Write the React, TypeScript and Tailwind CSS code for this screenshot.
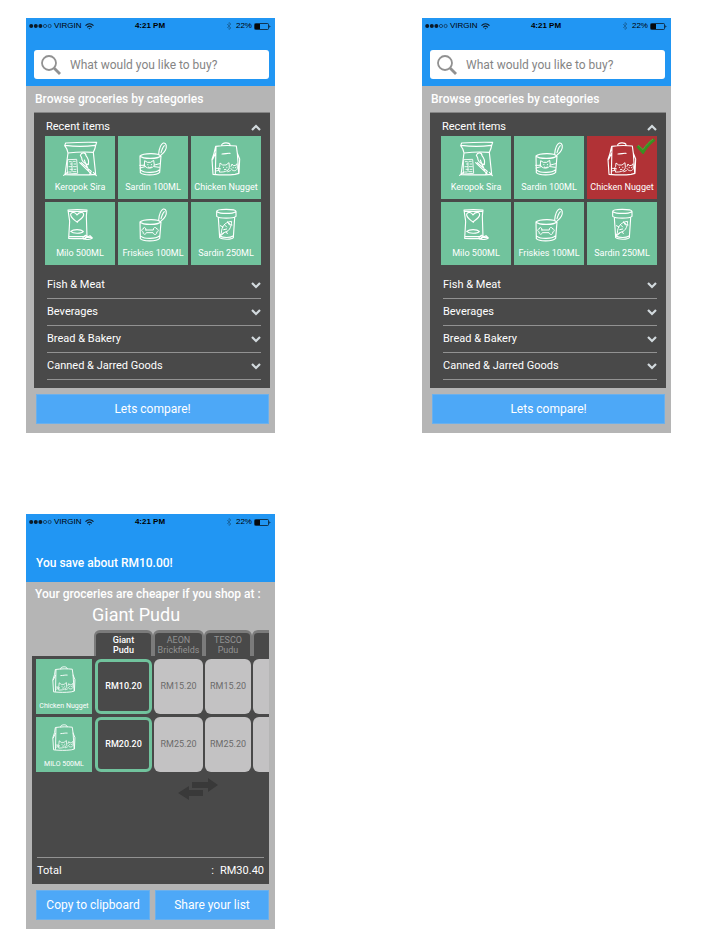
import React from "react";

type IconName = "chips" | "can" | "bag" | "pouch" | "boneCan" | "jar";

type Item = { name: string; icon: IconName };

const recentItems: Item[] = [
  { name: "Keropok Sira", icon: "chips" },
  { name: "Sardin 100ML", icon: "can" },
  { name: "Chicken Nugget", icon: "bag" },
  { name: "Milo 500ML", icon: "pouch" },
  { name: "Friskies 100ML", icon: "boneCan" },
  { name: "Sardin 250ML", icon: "jar" },
];

const categories = ["Fish & Meat", "Beverages", "Bread & Bakery", "Canned & Jarred Goods"];

const tinBody = (
  <>
    <path d="M66 60c10-9 55-10 62 0c-8 9-52 10-62 0zM66 60l1 50c8 9 48 9 58-1l4-49M69 103c12 9 44 8 55-1" />
    <path d="M122 54c1-12 4-28 14-33c10-1 11 13 6 22c-4 8-10 12-15 16M129 50c3-9 5-18 10-21" />
  </>
);

const drawings: Record<IconName, React.ReactNode> = {
  chips: (
    <>
      <path d="M62 21c30-2 60-3 93-2l-3 9c-1 9-4 15-7 21l7 66c-28 3-60 2-92 1l9-65c-1-9-5-16-10-22zM61 28c30 4 60 4 90 0M69 51c24-3 50-4 76-2M56 118l13-10M154 119l-9-10" />
      <path d="M69 71l26-1l3 42l-30 2zM73 77h6M84 76h7M76 84h4M87 84h5M72 92h8M85 92h9M75 100h7M87 100h6M72 108h6M84 107h9M81 80v26" strokeWidth="2.6" />
      <path d="M106 58c4-11 17-9 17 1c7 8 9 17 7 27c-11-3-20-10-20-21zM118 72l6 16M104 80l34 33M109 80l30 26l-5 9M124 86l7 17" />
    </>
  ),
  can: (
    <>
      {tinBody}
      <path d="M79 87l1-13l8 5h10l9-6l2 14c-3 12-27 13-30 0zM65 88h15M66 96l15-4M110 87l15-4M109 92l15 2M89 86h1M100 86h1M91 93l4 2l5-2" strokeWidth="3" />
    </>
  ),
  bag: (
    <>
      <path d="M74 31c22-3 43-3 62-1l3 22l7 17l-2 43l-12 3c-23 3-43 2-66 0l-3-45l6-18zM75 33l-2 80M65 70l8-17M139 52l4 58M92 29c-3-10 27-12 25-1M93 54c10 0 16-3 24-2" />
      <path d="M86 108c-5-7-4-12 0-17l1-10l8 6h10l9-7l1 14c-1 13-20 15-29 14M76 97l12 1M75 105l12-3M97 94h1M107 94h1M100 101l5-1M120 91l3-7l4 5l7-1l4-5l1 14c-2 9-15 10-19 1M126 95h1M133 95h1M118 104l-8 3" strokeWidth="2.8" />
    </>
  ),
  pouch: (
    <>
      <path d="M69 24c19-2 37-2 57 0l-2 18l2 63l-4 4c-17 2-34 1-51 0l3-51zM71 28h52M74 104h46" />
      <path d="M97 61c-11-9-22-15-20-25c5-8 15-5 19 3c6-10 20-11 20-1c-1 10-12 15-20 22M77 88c8-7 31-7 38 0c-5 7-30 8-38 0z" />
      <path d="M114 105l8-5l6 4l7-3l7 7c-5 5-19 5-27 3zM121 106h17" />
    </>
  ),
  boneCan: (
    <>
      {tinBody}
      <path d="M84 84h22c-1-9 9-10 10-3c7 0 6 9 0 9c2 9-9 10-11 2H85c-2 8-12 5-9-2c-7-2-6-9 0-9c-1-7 8-7 8 3z" strokeWidth="3" />
    </>
  ),
  jar: (
    <>
      <path d="M77 28c0-8 57-8 58 0v15c-8 7-50 7-58 0zM78 29c10 7 46 7 56 0M82 47l4 60c8 6 35 7 41 0l4-60M87 102c9 6 31 6 39 0" />
      <path d="M91 92c1-17 8-31 31-34c-1 20-9 32-25 34l-9 8zM110 59l4 9l9 1M96 75l-8-4M105 88l4 7M102 70l5 5M98 83l9-2M115 65h1M88 102l10-8" strokeWidth="3" />
    </>
  ),
};

function ProductIcon({ name, className }: { name: IconName; className: string }) {
  return (
    <svg viewBox="0 0 210 126" className={className} fill="none" stroke="white" strokeWidth="3.4" strokeLinecap="round" strokeLinejoin="round" aria-hidden="true">
      {drawings[name]}
    </svg>
  );
}

function Chevron({ up = false }: { up?: boolean }) {
  return (
    <svg viewBox="0 0 10 8" className="h-2 w-2.5 shrink-0" fill="none" stroke="#d3dade" strokeWidth="2.2" aria-hidden="true">
      <path d={up ? "M1 6l4-4l4 4" : "M1 2l4 4l4-4"} />
    </svg>
  );
}

function StatusBar() {
  return (
    <div className="grid h-4 grid-cols-3 items-center pl-[3px] pr-1 font-['Liberation_Sans',Arial,sans-serif] text-[8px] leading-4 text-black">
      <div className="flex items-center">
        <svg viewBox="0 0 23 6" className="mr-[2px] h-1.5 w-[23px]" aria-hidden="true">
          <circle cx="2.2" cy="3" r="2" fill="#0b1a28" />
          <circle cx="6.8" cy="3" r="2" fill="#0b1a28" />
          <circle cx="11.4" cy="3" r="2" fill="#0b1a28" />
          <circle cx="16" cy="3" r="1.6" fill="none" stroke="#0b1a28" strokeWidth=".6" />
          <circle cx="20.6" cy="3" r="1.6" fill="none" stroke="#0b1a28" strokeWidth=".6" />
        </svg>
        <span>VIRGIN</span>
        <svg viewBox="0 0 9 7" className="ml-[3px] h-[7px] w-[9px]" fill="none" stroke="#0b1a28" strokeWidth="1.2" aria-hidden="true">
          <path d="M.5 2.6c2.3-2.2 5.7-2.2 8 0M2.2 4.3c1.3-1.3 3.3-1.3 4.6 0" />
          <path d="M3.4 5.3h2.2L4.5 6.6z" fill="#0b1a28" stroke="none" />
        </svg>
      </div>
      <span className="text-center font-bold">4:21 PM</span>
      <div className="flex items-center justify-end">
        <svg viewBox="0 0 6 8" className="mr-1 h-2 w-1.5" fill="none" stroke="#17639f" strokeWidth=".8" aria-hidden="true">
          <path d="M1 2l4 4l-2 1.5V.5L5 2L1 6" />
        </svg>
        <span>22%</span>
        <svg viewBox="0 0 17 7" className="ml-[2px] h-[7px] w-[17px]" aria-hidden="true">
          <rect x=".5" y=".5" width="14" height="6" rx="1" fill="none" stroke="#0b1a28" strokeWidth=".8" />
          <rect x="1" y="1" width="5" height="5" fill="#06090c" />
          <path d="M15.300 2.200v2.600l1.300-1.300z" fill="#0b1a28" />
        </svg>
      </div>
    </div>
  );
}

function Phone({ label, header, children }: { label: string; header: React.ReactNode; children: React.ReactNode }) {
  return (
    <section aria-label={label} className="flex min-w-0 flex-col bg-[#b5b5b5]">
      <header className="h-[68px] bg-[#2196f3]">
        <StatusBar />
        {header}
      </header>
      {children}
    </section>
  );
}

function BrowseScreen({ id, selected }: { id: string; selected?: string }) {
  return (
    <Phone
      label="Browse groceries"
      header={
        <div className="mt-4 ml-2 mr-1.5 flex h-[29px] items-center rounded-[3px] bg-white pl-1.5">
          <label htmlFor={id} aria-label="Search groceries">
            <svg viewBox="0 0 22 22" className="h-[22px] w-[22px]" fill="none" stroke="#919191" aria-hidden="true">
              <circle cx="9" cy="9" r="7" strokeWidth="1.8" />
              <path d="M14 14l6 6" strokeWidth="2.8" />
            </svg>
          </label>
          <input id={id} type="text" placeholder="What would you like to buy?" className="ml-2 min-w-0 flex-1 bg-transparent text-[12px] leading-4 outline-none placeholder:text-[#858585]" />
        </div>
      }
    >
      <h2 className="h-[26px] pl-[9px] text-[12px] font-medium leading-[26px] text-white">Browse groceries by categories</h2>
      <div className="ml-2 mr-[5px] border-t border-[#858585] bg-[#494949] pl-[11px] pr-[9px] pb-2 text-[11px] text-white">
        <button type="button" className="flex h-[23px] w-full items-center justify-between pl-[1px] pt-1.5 text-left">
          <span>Recent items</span>
          <Chevron up />
        </button>
        <div className="grid grid-cols-3 gap-[3px]">
          {recentItems.map((item) => {
            const active = item.name === selected;
            return (
              <button
                key={item.name}
                type="button"
                aria-pressed={active}
                className={`relative flex h-[63px] flex-col items-center text-[9px] leading-3 ${active ? "bg-[#b13236]" : "bg-[#71c39d]"}`}
              >
                <ProductIcon name={item.icon} className="h-[42px] w-[70px]" />
                <span className="mt-[3px] whitespace-nowrap">{item.name}</span>
                {active && (
                  <svg viewBox="0 0 20 16" className="absolute right-[1px] top-[2px] h-4 w-5" fill="none" aria-hidden="true">
                    <path d="M1.5 8l5.5 6C10 9 14 4.5 18.5 1.5" stroke="#3a8f22" strokeWidth="3.2" />
                    <path d="M2 7l5 4.500C10 7 13 4 17 1" stroke="#54b03a" strokeWidth=".8" />
                  </svg>
                )}
              </button>
            );
          })}
        </div>
        <ul className="ml-[2px] mt-[7px]">
          {categories.map((category) => (
            <li key={category}>
              <button type="button" className="flex h-[27px] w-full items-center justify-between border-b border-[#929292] text-left">
                <span>{category}</span>
                <Chevron />
              </button>
            </li>
          ))}
        </ul>
      </div>
      <div className="mb-[9px] ml-2.5 mr-1.5 mt-1.5 flex">
        <ActionButton>Lets compare!</ActionButton>
      </div>
    </Phone>
  );
}

function ActionButton({ children }: { children: React.ReactNode }) {
  return (
    <button type="button" className="h-[30px] flex-1 border border-[#6bb0ec] bg-[#4da8f7] text-[12px] text-white">
      {children}
    </button>
  );
}

const stores = [["Giant", "Pudu"], ["AEON", "Brickfields"], ["TESCO", "Pudu"]];

const prices = [
  { name: "Chicken Nugget", values: ["RM10.20", "RM15.20", "RM15.20"] },
  { name: "MILO 500ML", values: ["RM20.20", "RM25.20", "RM25.20"] },
];

function CompareScreen() {
  return (
    <Phone label="Price comparison" header={<p className="mt-6 pl-2.5 text-[12px] font-medium leading-[18px] text-white">You save about RM10.00!</p>}>
      <p className="whitespace-nowrap pl-[9px] text-[12px] font-medium leading-6 text-white">Your groceries are cheaper if you shop at :</p>
      <h2 className="h-6 pl-[66px] text-[18px] leading-[18px] text-white">Giant Pudu</h2>
      <div className="ml-1.5 mr-1.5 overflow-hidden">
        <table className="w-full table-fixed border-separate border-spacing-0 text-center">
          <colgroup>
            <col className="w-[62px]" />
            <col className="w-[59px]" />
            <col className="w-[51px]" />
            <col className="w-[48px]" />
            <col />
          </colgroup>
          <thead>
            <tr className="text-[9px] leading-[10px]">
              <td />
              {stores.map(([first, second], i) => (
                <th
                  key={first}
                  scope="col"
                  className={`h-[26px] rounded-t-md border-x-2 border-t-[3px] border-[#7b7b7b] bg-[#494949] p-0 ${i === 0 ? "font-medium text-white" : "font-normal text-[#929292]"}`}
                >
                  {first}
                  <br />
                  {second}
                </th>
              ))}
              <td className="rounded-tl-md border-l-2 border-t-[3px] border-[#7b7b7b] bg-[#494949]" />
            </tr>
          </thead>
          <tbody>
            {prices.map((row) => (
              <tr key={row.name} className="h-[58px] bg-[#494949] text-[9px]">
                <th scope="row" className="pb-0 pl-1 pr-[2px] pt-[3px] font-normal">
                  <div className="flex h-[55px] flex-col items-center bg-[#71c39d] pt-[2px] text-[7px] leading-[10px] text-white">
                    <ProductIcon name="bag" className="h-[34px] w-[56px]" />
                    <span className="mt-1.5 whitespace-nowrap">{row.name}</span>
                  </div>
                </th>
                {row.values.map((value, i) => (
                  <td key={i} className="px-[1px] pb-0 pt-[3px]">
                    <div
                      className={`flex h-[55px] items-center justify-center rounded-md ${
                        i === 0 ? "border-[3px] border-[#71c39d] bg-[#494949] font-medium text-white" : "bg-[#c3c2c3] text-[#6b6b6b]"
                      }`}
                    >
                      {value}
                    </div>
                  </td>
                ))}
                <td className="pb-0 pl-[1px] pr-0 pt-[3px]">
                  <div className="h-[55px] rounded-l-md bg-[#c3c2c3]" />
                </td>
              </tr>
            ))}
          </tbody>
        </table>
        <div className="bg-[#494949] pt-1.5">
          <svg viewBox="0 0 40 22" className="ml-[146px] h-[22px] w-10" fill="#393939" aria-label="Scroll sideways">
            <path d="M14 4h16V0l10 7l-10 7v-4H14zM0 15l11-7v4h14v6H11v4z" />
          </svg>
          <dl className="ml-[5px] mr-[5px] mt-[57px] flex h-[27px] items-center border-t border-[#929292] text-[11px] text-white">
            <dt>Total</dt>
            <dd className="ml-auto flex gap-[6px]">
              <span>:</span>
              <span>RM30.40</span>
            </dd>
          </dl>
        </div>
      </div>
      <div className="mb-[9px] ml-2.5 mr-1.5 mt-1.5 flex gap-[5px]">
        <ActionButton>Copy to clipboard</ActionButton>
        <ActionButton>Share your list</ActionButton>
      </div>
    </Phone>
  );
}

export default function App() {
  return (
    <main className="grid grid-cols-2 gap-x-[147px] gap-y-[81px] bg-white pb-5 pl-[26px] pr-[30px] pt-[18px] font-[Roboto,sans-serif]">
      <BrowseScreen id="search-empty" />
      <BrowseScreen id="search-selected" selected="Chicken Nugget" />
      <CompareScreen />
    </main>
  );
}
